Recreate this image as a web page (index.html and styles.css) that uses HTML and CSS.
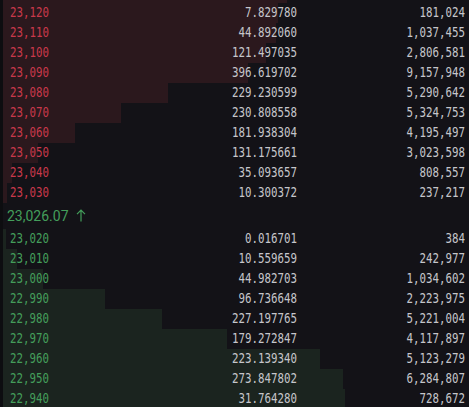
FILE: index.html
```html
<!DOCTYPE html>
<html lang="en">
<head>
    <meta charset="UTF-8">
    <meta name="viewport" content="width=device-width, initial-scale=1.0">
    <title>Order Book</title>
    <link rel="stylesheet" href="styles.css">
</head>
<body>
    <div class="orderbook">
        <div class="book">
            <div class="row ask" style="--w: 284px" aria-hidden="true"></div>
            <div class="row ask" style="--w: 275px"><span class="price">23,120</span><span class="qty">7.829780</span><span class="total">181,024</span></div>
            <div class="row ask" style="--w: 273px"><span class="price">23,110</span><span class="qty">44.892060</span><span class="total">1,037,455</span></div>
            <div class="row ask" style="--w: 263px"><span class="price">23,100</span><span class="qty">121.497035</span><span class="total">2,806,581</span></div>
            <div class="row ask" style="--w: 245px"><span class="price">23,090</span><span class="qty">396.619702</span><span class="total">9,157,948</span></div>
            <div class="row ask" style="--w: 165px"><span class="price">23,080</span><span class="qty">229.230599</span><span class="total">5,290,642</span></div>
            <div class="row ask" style="--w: 118px"><span class="price">23,070</span><span class="qty">230.808558</span><span class="total">5,324,753</span></div>
            <div class="row ask" style="--w: 72px"><span class="price">23,060</span><span class="qty">181.938304</span><span class="total">4,195,497</span></div>
            <div class="row ask" style="--w: 35px"><span class="price">23,050</span><span class="qty">131.175661</span><span class="total">3,023,598</span></div>
            <div class="row ask" style="--w: 9px"><span class="price">23,040</span><span class="qty">35.093657</span><span class="total">808,557</span></div>
            <div class="row ask" style="--w: 4px"><span class="price">23,030</span><span class="qty">10.300372</span><span class="total">237,217</span></div>

            <div class="ticker">
                <span>23,026.07</span>
                <svg class="arrow" width="10" height="13" viewBox="0 0 10 13">
                    <path d="M5 1.2V12.6M1 5.2L5 1.2L9 5.2" fill="none" stroke="currentColor" stroke-width="1.2"/>
                </svg>
            </div>

            <div class="row bid" style="--w: 3px"><span class="price">23,020</span><span class="qty">0.016701</span><span class="total">384</span></div>
            <div class="row bid" style="--w: 14px"><span class="price">23,010</span><span class="qty">10.559659</span><span class="total">242,977</span></div>
            <div class="row bid" style="--w: 40px"><span class="price">23,000</span><span class="qty">44.982703</span><span class="total">1,034,602</span></div>
            <div class="row bid" style="--w: 102px"><span class="price">22,990</span><span class="qty">96.736648</span><span class="total">2,223,975</span></div>
            <div class="row bid" style="--w: 159px"><span class="price">22,980</span><span class="qty">227.197765</span><span class="total">5,221,004</span></div>
            <div class="row bid" style="--w: 224px"><span class="price">22,970</span><span class="qty">179.272847</span><span class="total">4,117,897</span></div>
            <div class="row bid" style="--w: 317px"><span class="price">22,960</span><span class="qty">223.139340</span><span class="total">5,123,279</span></div>
            <div class="row bid" style="--w: 340px"><span class="price">22,950</span><span class="qty">273.847802</span><span class="total">6,284,807</span></div>
            <div class="row bid" style="--w: 342px"><span class="price">22,940</span><span class="qty">31.764280</span><span class="total">728,672</span></div>
        </div>
    </div>
</body>
</html>
```

FILE: styles.css
```css
html, body {
    margin: 0;
    height: 100%;
}
body {
    background-color: #131217;
    overflow: hidden;
}
.orderbook {
    height: 407px;
    overflow: hidden;
    border-left: 3px solid #0d0d10;
    background-color: #131217;
}
/* list is scrolled a little, the row above 23,120 shows only its bar */
.book {
    margin-top: -17px;
}
.row {
    display: grid;
    grid-template-columns: 1fr 168px 168px;
    box-sizing: border-box;
    height: 20px;
    padding: 0 4px 2px 7px;
    font-family: "DejaVu Sans Mono", monospace;
    font-size: 13.5px;
    line-height: 18px;
    color: #c6c6cb;
    white-space: nowrap;
    background: linear-gradient(to right, var(--bar) var(--w), transparent var(--w));
}
.row span {
    display: block;
    transform: scaleX(0.8);
}
.price {
    transform-origin: left center;
}
.qty,
.total {
    text-align: right;
    transform-origin: right center;
}
.ask {
    --bar: #2b181d;
}
.ask .price {
    color: #c9394b;
}
.bid {
    --bar: #1b241f;
}
.bid .price {
    color: #449e5b;
}
.ticker {
    display: flex;
    align-items: center;
    gap: 7px;
    height: 26px;
    padding-left: 4px;
    font-family: Roboto, sans-serif;
    font-size: 14px;
    line-height: 26px;
    color: #449e5b;
}
.arrow {
    margin-bottom: 1px;
}
```
